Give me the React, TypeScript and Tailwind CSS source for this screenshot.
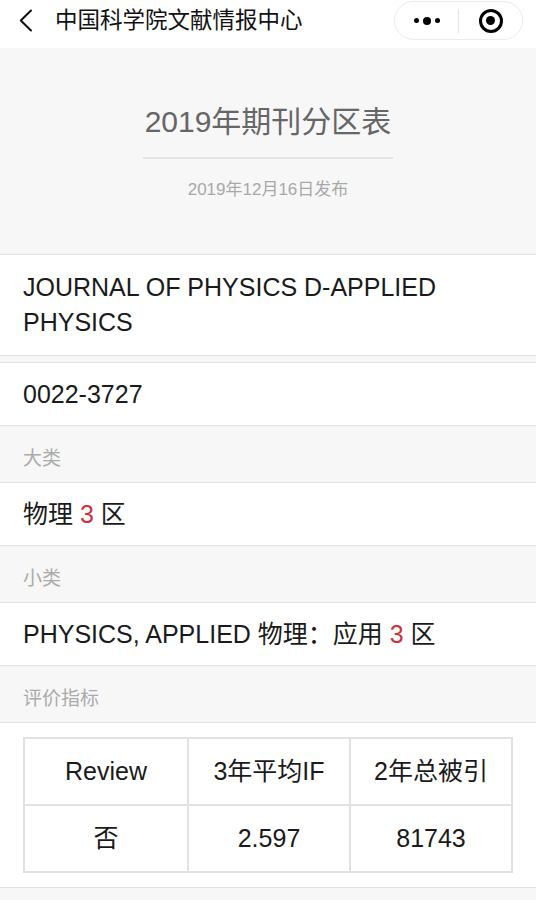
const font = { fontFamily: '"Liberation Sans", "Noto Sans CJK SC", sans-serif' };

function Label({ text }: { text: string }) {
  return (
    <div className="h-[56px] flex items-end px-[23px] pb-[9px] text-[19px] text-[#ababab]">
      {text}
    </div>
  );
}

function Row({ children }: { children: React.ReactNode }) {
  return (
    <div className="bg-white border-y border-[#e2e2e2] min-h-[64px] flex items-center px-[23px] text-[25px] text-[#1a1a1a] leading-[35px]">
      <div>{children}</div>
    </div>
  );
}

export default function App() {
  return (
    <div className="w-[536px] h-[900px] bg-[#f7f7f7] overflow-hidden" style={font}>
      {/* nav bar */}
      <div className="h-[48px] bg-white flex items-start pt-[9px] relative">
        <svg width="14" height="24" viewBox="0 0 14 24" className="ml-[19px] mt-[0px]">
          <polyline points="12,1.5 1.8,11.5 12,21.5" fill="none" stroke="#111" strokeWidth="2" strokeLinecap="round" strokeLinejoin="round" />
        </svg>
        <span className="ml-[22px] text-[22.5px] leading-[24px] text-[#111]">中国科学院文献情报中心</span>
        <div className="absolute right-[13px] top-[1px] w-[129px] h-[39px] rounded-full border border-[#ececec] bg-white flex items-center">
          <div className="flex-1 flex items-center justify-center gap-[4px]">
            <span className="w-[5px] h-[5px] rounded-full bg-black" />
            <span className="w-[8px] h-[8px] rounded-full bg-black" />
            <span className="w-[5px] h-[5px] rounded-full bg-black" />
          </div>
          <div className="w-px h-[24px] bg-[#e5e5e5]" />
          <div className="flex-1 flex items-center justify-center">
            <div className="w-[24px] h-[24px] rounded-full border-[3px] border-black flex items-center justify-center">
              <span className="w-[9px] h-[9px] rounded-full bg-black" />
            </div>
          </div>
        </div>
      </div>

      {/* header */}
      <div className="h-[206px] flex flex-col items-center pt-[54px]">
        <div className="text-[30px] text-[#666] leading-[40px]">2019年期刊分区表</div>
        <div className="w-[250px] h-[2px] bg-[#e4e4e4] mt-[15px]" />
        <div className="mt-[18px] text-[17px] text-[#a8a8a8]">2019年12月16日发布</div>
      </div>

      <Row>
        <div className="py-[15px]">
          JOURNAL OF PHYSICS D-APPLIED
          <br />
          PHYSICS
        </div>
      </Row>
      <div className="h-[6px]" />
      <Row>0022-3727</Row>

      <Label text="大类" />
      <Row>
        物理 <span className="text-[#cc3340]">3</span> 区
      </Row>

      <Label text="小类" />
      <Row>
        PHYSICS, APPLIED 物理：应用 <span className="text-[#cc3340]">3</span> 区
      </Row>

      <Label text="评价指标" />
      <div className="bg-white border-y border-[#e2e2e2] px-[23px] py-[14px]">
        <table className="w-full border-collapse text-[25px] text-[#1a1a1a] text-center">
          <tbody>
            <tr className="h-[67px]">
              <td className="border-2 border-[#e2e2e2] w-[164px]">Review</td>
              <td className="border-2 border-[#e2e2e2] w-[162px]">3年平均IF</td>
              <td className="border-2 border-[#e2e2e2]">2年总被引</td>
            </tr>
            <tr className="h-[67px]">
              <td className="border-2 border-[#e2e2e2]">否</td>
              <td className="border-2 border-[#e2e2e2]">2.597</td>
              <td className="border-2 border-[#e2e2e2]">81743</td>
            </tr>
          </tbody>
        </table>
      </div>
    </div>
  );
}
